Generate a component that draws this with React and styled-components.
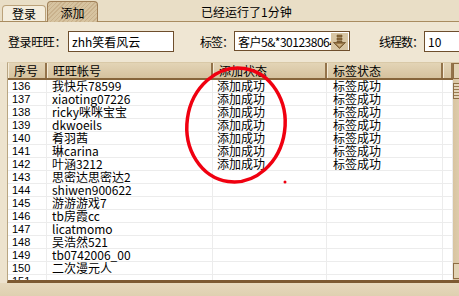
import React from 'react';
import styled, { createGlobalStyle } from 'styled-components';

const GlobalStyle = createGlobalStyle`
  html, body {
    margin: 0;
    padding: 0;
    background: #ece2cc;
  }
  * { box-sizing: border-box; }
`;

const CJK = `"Noto Sans CJK SC", "Liberation Sans", sans-serif`;

const Window = styled.div`
  width: 459px;
  height: 296px;
  overflow: hidden;
  background: #ede3ce;
  font-family: ${CJK};
  font-size: 12px;
  color: #000;
  display: flex;
  flex-direction: column;
`;

const TabBar = styled.div`
  height: 22px;
  display: flex;
  align-items: flex-end;
  padding-left: 2px;
  border-bottom: 1px solid #a98c60;
  background: #e9dec6;
  flex-shrink: 0;
`;

const Tab = styled.div`
  height: ${p => (p.$active ? '21px' : '16px')};
  width: ${p => (p.$active ? '51px' : '44px')};
  margin-right: 1px;
  margin-bottom: ${p => (p.$active ? '-1px' : '0')};
  display: flex;
  align-items: center;
  justify-content: center;
  line-height: 1;
  border: 1px solid ${p => (p.$active ? '#a08058' : '#bba27a')};
  border-bottom: none;
  border-radius: 4px 4px 0 0;
  background: ${p =>
    p.$active
      ? 'repeating-linear-gradient(135deg, #c9b18c 0 1px, #d6c3a0 1px 3px)'
      : '#f4eddd'};
  padding-top: ${p => (p.$active ? '2px' : '0')};
`;

const Status = styled.div`
  margin-left: 102px;
  align-self: center;
  padding-top: 2px;
`;

const Toolbar = styled.div`
  height: 40px;
  display: flex;
  align-items: flex-start;
  padding: 9px 0 0 8px;
  flex-shrink: 0;
  background: #efe6d3;
`;

const Label = styled.span`
  width: ${p => p.$w}px;
  flex-shrink: 0;
  line-height: 21px;
  white-space: nowrap;
  letter-spacing: ${p => p.$ls || 0}px;
`;

const Input = styled.div`
  width: ${p => p.$w}px;
  height: 21px;
  flex-shrink: 0;
  background: #fff;
  border: 1px solid #6e4e2c;
  padding-left: 3px;
  line-height: 19px;
  white-space: nowrap;
  overflow: hidden;
  margin-right: ${p => p.$gap || 0}px;
`;

const Combo = styled(Input)`
  display: flex;
  align-items: center;
  justify-content: space-between;
  padding-right: 1px;
  height: 20px;
`;

const ComboText = styled.span`
  overflow: hidden;
  white-space: nowrap;
  flex: 1;
  letter-spacing: -0.5px;
`;

const DropButton = styled.div`
  width: 17px;
  height: 17px;
  flex-shrink: 0;
  background: #d8c6a4;
  display: flex;
  align-items: center;
  justify-content: center;
`;

const GridFrame = styled.div`
  position: relative;
  margin-left: 7px;
  height: 221px;
  flex-shrink: 0;
  border-left: 1px solid #b9a682;
  border-top: 1px solid #d9c9a8;
  border-bottom: 3px solid #7c5a32;
  display: flex;
  overflow: hidden;
`;

const Grid = styled.div`
  width: 445px;
  flex-shrink: 0;
  background: #fff;
  overflow: hidden;
`;

const cols = '39px 166px 114px 116px 10px';

const HeaderRow = styled.div`
  display: grid;
  grid-template-columns: ${cols};
  height: 17px;
  background: #dccba9;
  border-bottom: 2px solid #86653b;
`;

const HeaderCell = styled.div`
  padding-left: 5px;
  line-height: 15px;
  background: linear-gradient(#e3d4b6, #d5c29e);
  border-left: 1px solid #f4ead6;
  border-right: 2px solid #93734a;
`;

const Row = styled.div`
  display: grid;
  grid-template-columns: ${cols};
  height: 13px;
  background: linear-gradient(to top, #ececec 1px, transparent 1px);
`;

const Cell = styled.div`
  padding-left: ${p => p.$pad ?? 5}px;
  line-height: 12px;
  font-size: 12px;
  white-space: nowrap;
  overflow-x: clip;
  overflow-y: visible;
  border-right: 1px solid #ececec;
  font-family: ${p => (p.$num ? `"Liberation Sans", sans-serif` : CJK)};
  ${p => p.$num && 'font-size: 11px; padding-left: 4px;'}
`;

const ScrollBar = styled.div`
  width: 16px;
  flex-shrink: 0;
  background: linear-gradient(90deg, #d8c4a0, #e6d8bc);
  display: flex;
  flex-direction: column;
  justify-content: space-between;
  padding-bottom: 1px;
`;

const ScrollTop = styled.div`
  display: flex;
  flex-direction: column;
  gap: 4px;
`;

const ScrollButton = styled.div`
  height: 16px;
  background: #e2d3b4;
  border: 1px solid #8e6d43;
  border-right: none;
`;

const Thumb = styled(ScrollButton)`
  background: repeating-linear-gradient(#e4d6ba 0 2px, #9a7a50 2px 3px);
`;

const Circle = styled.svg`
  position: absolute;
  left: 0;
  top: 0;
  pointer-events: none;
`;

const Footer = styled.div`
  flex: 1;
  background: linear-gradient(#e6d9bd, #dfd0b0);
`;

const rows = [
  ['136', '我快乐78599', '添加成功', '标签成功'],
  ['137', 'xiaoting07226', '添加成功', '标签成功'],
  ['138', 'ricky咪咪宝宝', '添加成功', '标签成功'],
  ['139', 'dkwoeils', '添加成功', '标签成功'],
  ['140', '肴羽茜', '添加成功', '标签成功'],
  ['141', '琳carina', '添加成功', '标签成功'],
  ['142', '叶涵3212', '添加成功', '标签成功'],
  ['143', '思密达思密达2', '', ''],
  ['144', 'shiwen900622', '', ''],
  ['145', '游游游戏7', '', ''],
  ['146', 'tb房霞cc', '', ''],
  ['147', 'licatmomo', '', ''],
  ['148', '吴浩然521', '', ''],
  ['149', 'tb0742006_00', '', ''],
  ['150', '二次漫元人', '', ''],
  ['151', '', '', ''],
];

const DownArrow = () => (
  <svg width="15" height="15" viewBox="0 0 15 15">
    <path d="M5 1h5v2H5zM5 4h5v2H5zM5 7h5v1H5z" fill="#8a6a3c" stroke="#6e5028" strokeWidth="0.6" />
    <path d="M1.5 8.5h12L7.5 14.5z" fill="#9b7a4a" stroke="#6e5028" strokeWidth="0.8" />
    <path d="M4.5 10h6L7.5 13z" fill="#c9ad80" />
  </svg>
);

export default function App() {
  return (
    <>
      <GlobalStyle />
      <Window>
        <TabBar>
          <Tab>登录</Tab>
          <Tab $active>添加</Tab>
          <Status>已经运行了1分钟</Status>
        </TabBar>
        <Toolbar>
          <Label $w={60} $ls={-0.4}>登录旺旺：</Label>
          <Input $w={106} $gap={26}>zhh笑看风云</Input>
          <Label $w={34} $ls={-1}>标签：</Label>
          <Combo $w={116} $gap={29}>
            <ComboText>客户5&amp;*301238064</ComboText>
            <DropButton><DownArrow /></DropButton>
          </Combo>
          <Label $w={45} $ls={-1}>线程数：</Label>
          <Input $w={60}>10</Input>
        </Toolbar>
        <GridFrame>
          <Grid>
            <HeaderRow>
              <HeaderCell>序号</HeaderCell>
              <HeaderCell>旺旺帐号</HeaderCell>
              <HeaderCell>添加状态</HeaderCell>
              <HeaderCell>标签状态</HeaderCell>
              <HeaderCell />
            </HeaderRow>
            {rows.map(r => (
              <Row key={r[0]}>
                <Cell $num>{r[0]}</Cell>
                <Cell>{r[1]}</Cell>
                <Cell $pad={4}>{r[2]}</Cell>
                <Cell $pad={6}>{r[3]}</Cell>
                <Cell />
              </Row>
            ))}
          </Grid>
          <ScrollBar>
            <ScrollTop>
              <ScrollButton />
              <Thumb />
            </ScrollTop>
            <ScrollButton />
          </ScrollBar>
          <Circle width="445" height="221">
            <ellipse cx="228" cy="62" rx="49" ry="57" fill="none" stroke="#f00010" strokeWidth="3.5" transform="rotate(8 228 62)" />
            <circle cx="277" cy="119" r="1.5" fill="#f00010" />
          </Circle>
        </GridFrame>
        <Footer />
      </Window>
    </>
  );
}
